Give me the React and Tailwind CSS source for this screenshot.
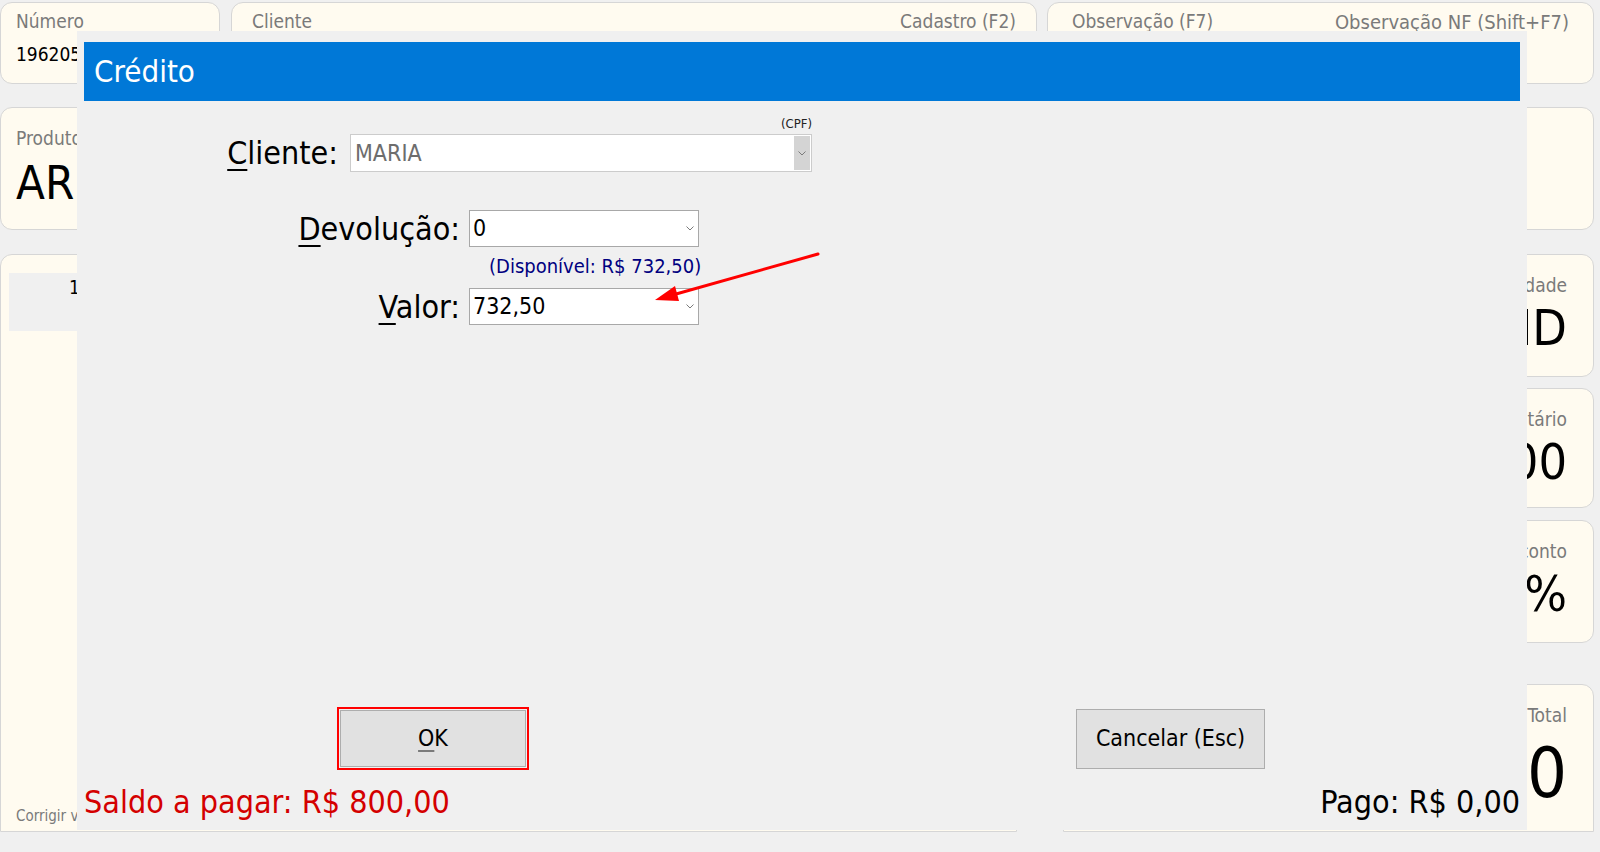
import React from 'react'

const Chevron = ({ className }) => (
    <svg width="8" height="5" viewBox="0 0 8 5" className={className}>
        <path d="M0.5 0.5 L4 4 L7.5 0.5" fill="none" stroke="#7a7a7a" strokeWidth="1" />
    </svg>
)

const Card = ({ className, children }) => (
    <div className={`bg-[#fffbf0] border border-[#d6d6d6] rounded-[12px] overflow-hidden ${className}`}>
        {children}
    </div>
)

const SideCard = ({ label, value, className, big }) => (
    <Card className={`flex flex-col items-end pr-[26px] ${className}`}>
        <span className="text-[19px] text-[#7a7a7a] mt-[16px]">{label}</span>
        <span className={`${big ? 'text-[70px] mt-[8px]' : 'text-[50px] mt-[3px]'} leading-none text-black`}>{value}</span>
    </Card>
)

export default function App() {
    return (
        <div className="relative w-[1600px] h-[852px] bg-[#f0f0f0] overflow-hidden font-['DejaVu_Sans_Condensed','DejaVu_Sans',sans-serif]">
            {/* fundo: tela de venda */}
            <div className="flex flex-col pt-[2px] pr-[6px]">
                <div className="flex gap-[10px] h-[82px]">
                    <Card className="w-[220px] pl-[15px] pt-[4px]">
                        <div className="text-[19px] text-[#7a7a7a]">Número</div>
                        <div className="text-[19px] text-black mt-[4px]">196205</div>
                    </Card>
                    <Card className="w-[806px] ml-[1px] px-[20px] pt-[4px]">
                        <div className="flex justify-between text-[19px] text-[#7a7a7a]">
                            <span>Cliente</span>
                            <span>Cadastro (F2)</span>
                        </div>
                    </Card>
                    <Card className="flex-1 px-[24px] pt-[4px]">
                        <div className="flex justify-between text-[19px] text-[#7a7a7a]">
                            <span>Observação (F7)</span>
                            <span className="text-[20px]">Observação NF (Shift+F7)</span>
                        </div>
                    </Card>
                </div>

                <Card className="mt-[23px] h-[123px] pl-[15px] pt-[16px]">
                    <div className="text-[19px] text-[#7a7a7a]">Produto</div>
                    <div className="text-[47px] leading-none text-black mt-[6px]">ARROZ</div>
                </Card>

                <div className="flex mt-[24px] h-[578px]">
                    <Card className="w-[1017px] flex flex-col !rounded-b-none">
                        <div className="mx-[8px] mt-[18px] h-[58px] bg-[#f0f0f0] pl-[60px] text-[19px]">1</div>
                        <div className="flex-1" />
                        <div className="pl-[15px] pb-[4px] text-[15px] text-[#7a7a7a]">Corrigir valor (F3)</div>
                    </Card>
                    <div className="ml-[46px] flex-1 flex flex-col">
                        <SideCard label="Quantidade" value="UND" className="h-[123px]" />
                        <SideCard label="Unitário" value="800,00" className="h-[120px] mt-[11px]" />
                        <SideCard label="Desconto" value="0%" className="h-[123px] mt-[12px]" />
                        <SideCard label="Total" value="800,00" className="h-[148px] mt-[41px] !rounded-b-none" big />
                    </div>
                </div>
            </div>

            {/* janela Crédito */}
            <div className="absolute left-[77px] top-[31px] w-[1450px] h-[799px] bg-[#f0f0f0] flex flex-col">
                <div className="mx-[7px] mt-[11px] h-[59px] bg-[#0078d7] flex items-center pl-[10px] text-white text-[31px]">
                    Crédito
                </div>

                <div className="w-[735px] text-right text-[13px] text-[#222] mt-[16px] leading-none">(CPF)</div>
                <div className="flex items-center mt-[4px]">
                    <span className="w-[261px] text-right text-[32px] text-black leading-none">
                        <span className="underline underline-offset-[5px] decoration-[2px]">C</span>liente:
                    </span>
                    <div className="ml-[12px] w-[462px] h-[38px] bg-white border border-[#cccccc] flex items-center">
                        <span className="flex-1 pl-[4px] text-[23px] text-[#6d6d6d]">MARIA</span>
                        <div className="w-[16px] h-[34px] mr-[1px] bg-[#d4d4d4] flex items-center justify-center">
                            <Chevron />
                        </div>
                    </div>
                </div>

                <div className="flex items-center mt-[38px]">
                    <span className="w-[383px] text-right text-[32px] text-black leading-none">
                        <span className="underline underline-offset-[5px] decoration-[2px]">D</span>evolução:
                    </span>
                    <div className="ml-[9px] w-[230px] h-[37px] bg-white border border-[#a8a8a8] flex items-center">
                        <span className="flex-1 pl-[3px] text-[23px] text-black">0</span>
                        <Chevron className="mr-[4px]" />
                    </div>
                </div>
                <div className="ml-[412px] mt-[7px] text-[20px] text-[#000080] leading-[24px]">(Disponível: R$ 732,50)</div>
                <div className="flex items-center mt-[10px]">
                    <span className="w-[383px] text-right text-[32px] text-black leading-none">
                        <span className="underline underline-offset-[5px] decoration-[2px]">V</span>alor:
                    </span>
                    <div className="ml-[9px] w-[230px] h-[37px] bg-white border border-[#a8a8a8] flex items-center">
                        <span className="flex-1 pl-[3px] text-[23px] text-black">732,50</span>
                        <Chevron className="mr-[4px]" />
                    </div>
                </div>

                <div className="flex items-center mt-[382px] h-[63px]">
                    <button className="ml-[260px] w-[192px] h-[63px] border-2 border-[#ff0000] p-[1px]">
                        <span className="w-full h-full bg-[#e1e1e1] border border-[#adadad] flex items-center justify-center text-[23px] text-black">
                            <span className="underline underline-offset-[4px] decoration-[#7a7a7a]">O</span>K
                        </span>
                    </button>
                    <button className="ml-[547px] w-[189px] h-[60px] bg-[#e1e1e1] border border-[#adadad] text-[23px] text-black">
                        Cancelar (Esc)
                    </button>
                </div>

                <div className="flex justify-between items-center px-[7px] mt-[12px] h-[40px] text-[32px]">
                    <span className="text-[#d40000]">Saldo a pagar: R$ 800,00</span>
                    <span className="text-black">Pago: R$ 0,00</span>
                </div>

                {/* seta vermelha */}
                <svg className="absolute left-[570px] top-[214px]" width="180" height="64" viewBox="0 0 180 64">
                    <line x1="171" y1="9" x2="22" y2="51" stroke="#ff0000" strokeWidth="3" strokeLinecap="round" />
                    <polygon points="8,55 28,41 32,56" fill="#ff0000" />
                </svg>
            </div>
        </div>
    )
}
